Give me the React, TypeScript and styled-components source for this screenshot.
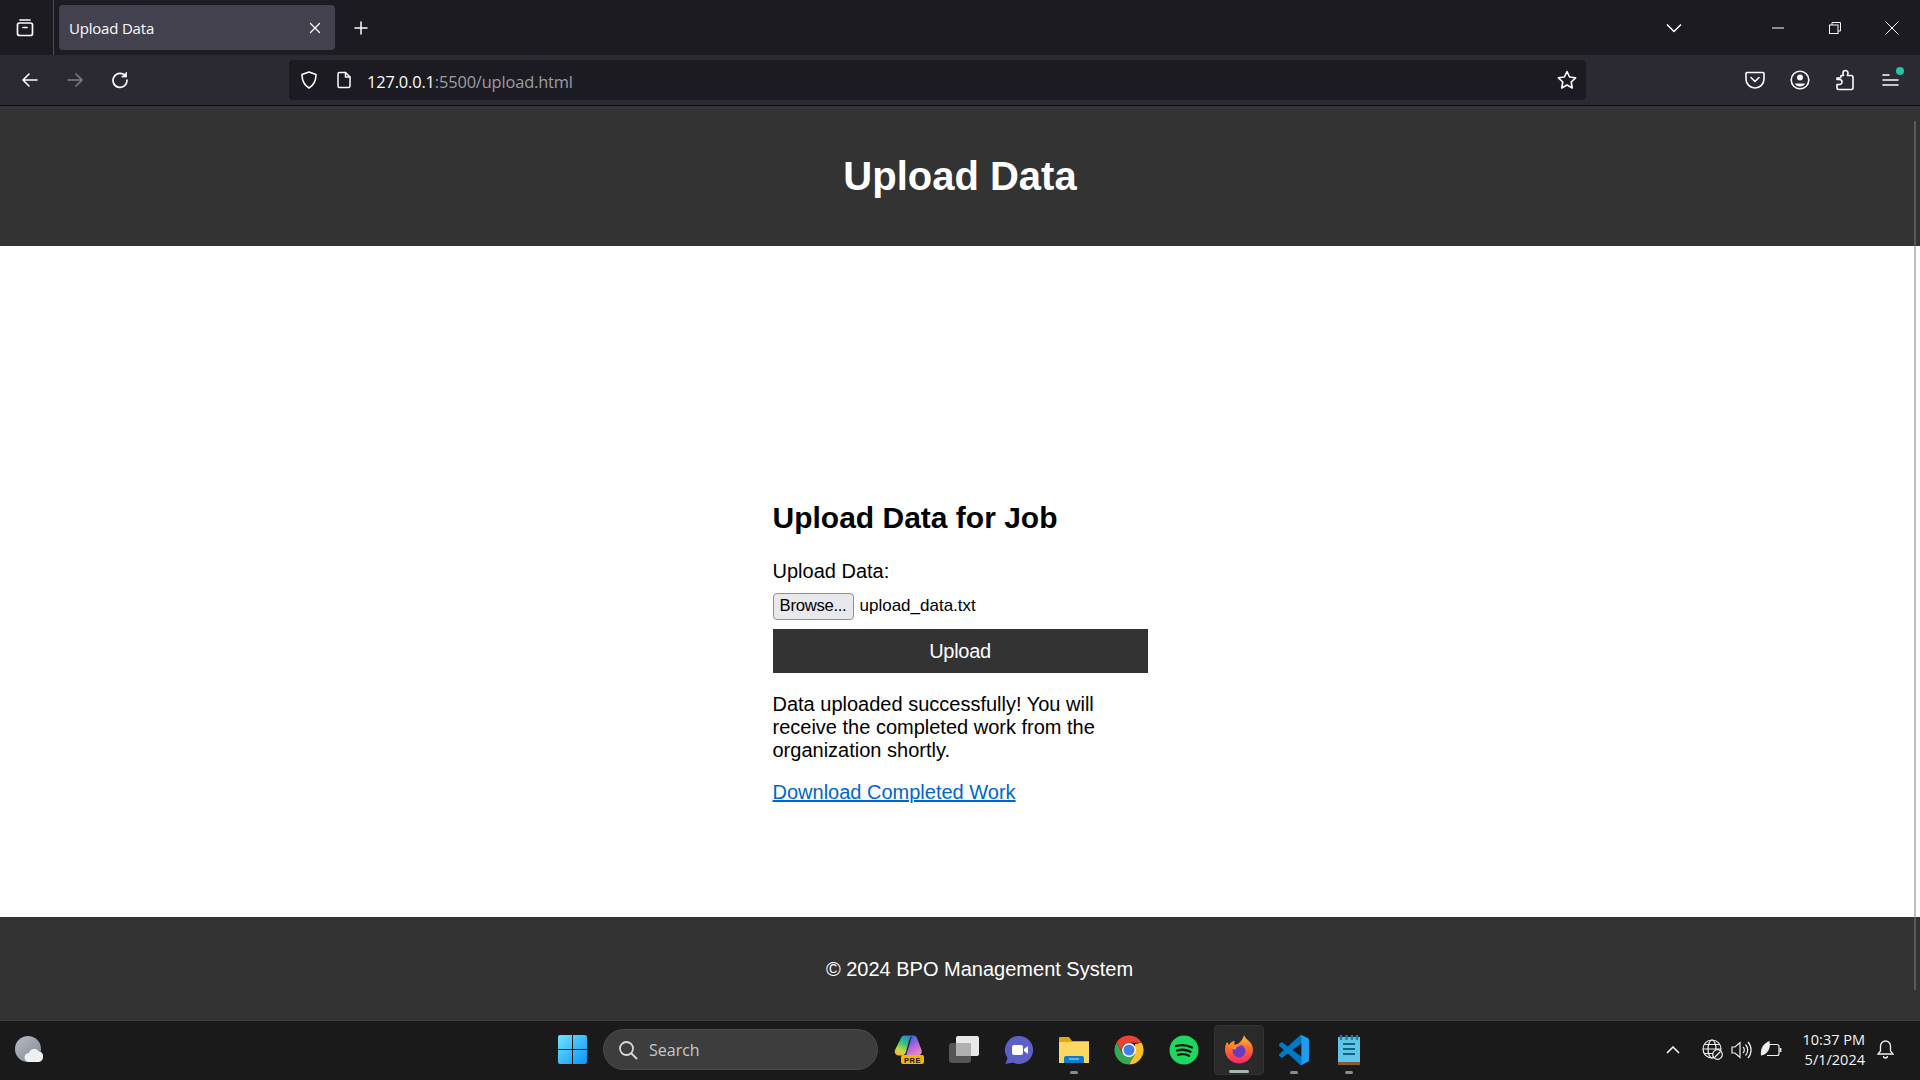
import React from "react";
import styled, { createGlobalStyle } from "styled-components";

const Global = createGlobalStyle`
  html, body { margin: 0; padding: 0; height: 100%; overflow: hidden; background: #fff; }
  #root { height: 1080px; }
`;

const Screen = styled.div`
  width: 1920px; height: 1080px; display: flex; flex-direction: column; overflow: hidden;
  font-family: "Liberation Sans", Arial, sans-serif;
`;

/* ---------- browser chrome ---------- */
const TabStrip = styled.div`
  height: 55px; flex: none; background: #1c1b22; display: flex; align-items: flex-start; color: #fbfbfe;
`;
const TabListButton = styled.div`
  width: 54px; height: 55px; flex: none; border-right: 1px solid #4a4a52; box-sizing: border-box;
  display: flex; align-items: center; justify-content: center; padding-right: 3px;
`;
const Tab = styled.div`
  width: 276px; height: 45px; margin: 5px 0 0 5px; flex: none; background: #42414d; border-radius: 4px;
  display: flex; align-items: center; justify-content: space-between; padding: 0 14px 0 10px;
  box-sizing: border-box; font: 15px "Open Sans", "Segoe UI", sans-serif;
`;
const TabTitle = styled.span` letter-spacing: -0.2px; `;
const NewTab = styled.div`
  width: 52px; height: 45px; margin-top: 5px; flex: none; display: flex; align-items: center; justify-content: center;
`;
const Spacer = styled.div` flex: 1; `;
const WinControls = styled.div`
  display: flex; align-items: center; height: 55px;
`;
const TabsMenu = styled.div`
  width: 57px; height: 53px; margin-right: 48px; display: flex; align-items: center; justify-content: center;
`;
const WinButton = styled.div<{ $w: number }>`
  width: ${(p) => p.$w}px; height: 53px; display: flex; align-items: center; justify-content: center;
`;

const NavBar = styled.div`
  height: 51px; flex: none; background: #2b2a33; display: flex; align-items: center; color: #fbfbfe;
  border-bottom: 1px solid #0c0c0d; box-sizing: border-box;
`;
const NavButtons = styled.div`
  width: 289px; flex: none; padding-left: 18px; box-sizing: border-box; display: flex; gap: 21px; align-items: center;
`;
const NavIcon = styled.div<{ $dim?: boolean }>`
  width: 24px; height: 24px; display: flex; align-items: center; justify-content: center;
  opacity: ${(p) => (p.$dim ? 0.4 : 1)};
`;
const UrlBar = styled.div`
  width: 1297px; height: 40px; flex: none; background: #1c1b22; border-radius: 4px; display: flex; align-items: center;
  padding: 0 8px 0 10px; box-sizing: border-box; gap: 17px;
`;
const UrlText = styled.div`
  flex: 1; margin-left: -2px; padding-top: 3px; font: 16.4px "Open Sans", "Segoe UI", sans-serif; letter-spacing: -0.15px; color: #fbfbfe;
  span { color: #9d9da3; }
`;
const NavRight = styled.div`
  flex: 1; display: flex; justify-content: flex-end; align-items: center; gap: 21px; padding-right: 18px;
`;
const MenuWrap = styled.div`
  position: relative; width: 24px; height: 24px; display: flex; align-items: center; justify-content: center;
`;
const Dot = styled.i`
  position: absolute; right: -2px; top: -1px; width: 8px; height: 8px; border-radius: 50%; background: #2ac3a2;
`;

/* ---------- page ---------- */
const Page = styled.div`
  flex: 1; min-height: 0; display: flex; flex-direction: column; position: relative; background: #fff;
`;
const Scrollbar = styled.div`
  position: absolute; right: 4px; top: 15px; bottom: 30px; width: 2px; background: rgba(128, 128, 128, 0.5);
`;
const PageHeader = styled.header`
  height: 140px; flex: none; background: #333; color: #fff; display: flex; align-items: center; justify-content: center;
  h1 { margin: 0; font-size: 40px; font-weight: 700; line-height: 46px; }
`;
const Main = styled.main`
  flex: 1; display: flex; align-items: flex-start; justify-content: center; padding-top: 255px; box-sizing: border-box;
`;
const Form = styled.section`
  width: 375px; color: #000; font-size: 20px;
  h2 { margin: 0 0 25px; font-size: 30px; line-height: 34px; font-weight: 700; }
`;
const Label = styled.div`
  line-height: 23px; margin-bottom: 9px;
`;
const FileRow = styled.div`
  display: flex; align-items: center; height: 28px; font-size: 17px;
`;
const Browse = styled.div`
  width: 81px; height: 27px; box-sizing: border-box; border: 1px solid #8f8f9d; border-radius: 4px; background: #e9e9ed;
  display: flex; align-items: center; justify-content: center; margin-right: 6px; color: #000;
  font-size: 16.7px; letter-spacing: -0.3px;
`;
const UploadButton = styled.div`
  margin-top: 9px; height: 44px; background: #333; color: #fff; display: flex; align-items: center; justify-content: center;
  font-size: 20px; letter-spacing: -0.3px; padding-top: 1px; box-sizing: border-box;
`;
const Message = styled.p`
  margin: 20px 0 0; line-height: 23px;
`;
const DownloadLink = styled.a`
  display: block; margin-top: 19px; line-height: 23px; color: #0066cc; text-decoration: underline;
`;
const Footer = styled.footer`
  height: 103px; flex: none; background: #333; color: #fff; font-size: 20px; display: flex; align-items: center; justify-content: center;
  padding: 2px 0 0 39px; box-sizing: border-box;
`;

/* ---------- taskbar ---------- */
const Taskbar = styled.div`
  height: 60px; flex: none; background: #1a1a1a; border-top: 1px solid #3f3f3f; box-sizing: border-box; padding-bottom: 2px;
  display: flex; align-items: center; position: relative; font-family: "Open Sans", "Segoe UI", sans-serif; color: #fff;
`;
const Weather = styled.div`
  width: 558px; flex: none; padding-left: 15px; box-sizing: border-box; display: flex; align-items: center;
`;
const Center = styled.div`
  display: flex; align-items: center;
`;
const SearchBox = styled.div`
  width: 275px; height: 41px; margin: 0 3px 0 16px; box-sizing: border-box; border-radius: 21px; background: #3d3d3d; border: 1px solid #4a4a4a;
  display: flex; align-items: center; padding-left: 14px; gap: 11px; color: #c8c8c8; font-size: 16px;
  span { padding-top: 1px; }
`;
const AppSlot = styled.div<{ $active?: boolean }>`
  width: 55px; height: 50px; position: relative; display: flex; align-items: center; justify-content: center; border-radius: 4px; box-sizing: border-box;
  ${(p) => p.$active && `background: #2a2a2a; border: 1px solid #333; width: 50px; margin: 0 2.5px;`}
`;
const Running = styled.i<{ $wide?: boolean }>`
  position: absolute; bottom: 1px; left: 50%; transform: translateX(-50%); height: 3px; border-radius: 2px;
  width: ${(p) => (p.$wide ? 20 : 8)}px; background: ${(p) => (p.$wide ? "#a9b8ae" : "#8b8b8b")};
`;
const Tray = styled.div`
  position: absolute; right: 0; top: 0; bottom: 2px; display: flex; align-items: center; padding-right: 26px;
`;
const TrayIcons = styled.div`
  display: flex; align-items: center; gap: 8px; margin-right: 20px;
  & > svg:first-child { margin-right: 14px; }
`;
const Clock = styled.div`
  text-align: right; font-size: 14.5px; line-height: 20px; margin-right: 12px; color: #f4f4f4;
`;

const Ic = { fill: "none", stroke: "currentColor", strokeWidth: 1.6, strokeLinecap: "round", strokeLinejoin: "round" } as const;

export default function App() {
  return (
    <Screen>
      <Global />
      <TabStrip>
        <TabListButton>
          <svg width="20" height="20" viewBox="0 0 20 20" {...Ic} strokeWidth={1.7}>
            <path d="M5 2h10" />
            <rect x="2.5" y="5" width="15" height="12.5" rx="2" />
            <path d="M8 9.5h4" />
          </svg>
        </TabListButton>
        <Tab>
          <TabTitle>Upload Data</TabTitle>
          <svg width="12" height="12" viewBox="0 0 12 12" {...Ic} strokeWidth={1.3}><path d="M1.5 1.5l9 9M10.5 1.5l-9 9" /></svg>
        </Tab>
        <NewTab>
          <svg width="14" height="14" viewBox="0 0 14 14" {...Ic} strokeWidth={1.5}><path d="M7 1v12M1 7h12" /></svg>
        </NewTab>
        <Spacer />
        <WinControls>
          <TabsMenu>
            <svg width="16" height="10" viewBox="0 0 16 10" {...Ic} strokeWidth={1.5} strokeLinecap="butt"><path d="M1 1.5l7 7 7-7" /></svg>
          </TabsMenu>
          <WinButton $w={56}>
            <svg width="12" height="2" viewBox="0 0 12 2" stroke="currentColor"><path d="M0 1h12" /></svg>
          </WinButton>
          <WinButton $w={57}>
            <svg width="12" height="12" viewBox="0 0 12 12" fill="none" stroke="currentColor"><path d="M3 3V.5h8.5V9H9" /><rect x=".5" y="3" width="8.5" height="8.5" /></svg>
          </WinButton>
          <WinButton $w={57}>
            <svg width="14" height="14" viewBox="0 0 14 14" fill="none" stroke="currentColor"><path d="M.5.5l13 13M13.5.5l-13 13" /></svg>
          </WinButton>
        </WinControls>
      </TabStrip>

      <NavBar>
        <NavButtons>
          <NavIcon>
            <svg width="18" height="18" viewBox="0 0 18 18" {...Ic}><path d="M16 9H2M8 3L2 9l6 6" /></svg>
          </NavIcon>
          <NavIcon $dim>
            <svg width="18" height="18" viewBox="0 0 18 18" {...Ic}><path d="M2 9h14M10 3l6 6-6 6" /></svg>
          </NavIcon>
          <NavIcon>
            <svg width="18" height="18" viewBox="0 0 18 18" {...Ic} strokeWidth={1.7}><path d="M14.6 5.2A7 7 0 1 0 16 9" /><path d="M15.5 1.5V6H11z" fill="currentColor" strokeWidth={0.8} /></svg>
          </NavIcon>
        </NavButtons>
        <UrlBar>
          <svg width="20" height="20" viewBox="0 0 20 20" {...Ic}><path d="M10 2l7 2.5C17 11 15 15 10 18 5 15 3 11 3 4.5z" /></svg>
          <svg width="16" height="18" viewBox="0 0 16 18" {...Ic} strokeWidth={1.5}><path d="M3.5 1.5h6L14 6v9a1.5 1.5 0 0 1-1.5 1.5h-9A1.5 1.5 0 0 1 2 15V3a1.5 1.5 0 0 1 1.5-1.5z" /><path d="M9.5 1.5V6H14" /></svg>
          <UrlText>127.0.0.1<span>:5500/upload.html</span></UrlText>
          <svg width="22" height="22" viewBox="0 0 22 22" {...Ic}><path d="M11 2.5l2.6 5.5 6 .8-4.4 4.2 1.1 6L11 16l-5.3 3 1.1-6L2.4 8.8l6-.8z" /></svg>
        </UrlBar>
        <NavRight>
          <NavIcon>
            <svg width="20" height="18" viewBox="0 0 20 18" {...Ic}><path d="M2 1.5h16a1 1 0 0 1 1 1V8a9 9 0 0 1-18 0V2.5a1 1 0 0 1 1-1z" /><path d="M6 6.5l4 4 4-4" /></svg>
          </NavIcon>
          <NavIcon>
            <svg width="20" height="20" viewBox="0 0 20 20" {...Ic}><circle cx="10" cy="10" r="8.8" /><circle cx="10" cy="7.5" r="3" fill="currentColor" stroke="none" /><path d="M4.8 13.5h10.4a6 6 0 0 1-10.4 0z" fill="currentColor" stroke="none" /></svg>
          </NavIcon>
          <NavIcon>
            <svg width="20" height="22" viewBox="0 0 20 22" {...Ic}><path d="M10.5 1.5A2.5 2.5 0 0 1 13 4c0 .8-.3 1.4-.6 2.5H16a2 2 0 0 1 2 2V19a1.5 1.5 0 0 1-1.5 1.5h-13A1.5 1.5 0 0 1 2 19v-3.500h2.500a2.500 2.500 0 0 0 0-5H2V9h2.500A1.500 1.500 0 0 0 6 7.500v-1h2.500C8.200 5.500 8 4.800 8 4a2.500 2.500 0 0 1 2.500-2.500z" /></svg>
          </NavIcon>
          <MenuWrap>
            <svg width="18" height="16" viewBox="0 0 18 16" {...Ic}><path d="M2 3h6M2 8h15M2 13h15" /></svg>
            <Dot />
          </MenuWrap>
        </NavRight>
      </NavBar>

      <Page>
        <PageHeader><h1>Upload Data</h1></PageHeader>
        <Main>
          <Form>
            <h2>Upload Data for Job</h2>
            <Label>Upload Data:</Label>
            <FileRow><Browse>Browse...</Browse>upload_data.txt</FileRow>
            <UploadButton>Upload</UploadButton>
            <Message>Data uploaded successfully! You will receive the completed work from the organization shortly.</Message>
            <DownloadLink href="#">Download Completed Work</DownloadLink>
          </Form>
        </Main>
        <Footer>© 2024 BPO Management System</Footer>
        <Scrollbar />
      </Page>

      <Taskbar>
        <Weather>
          <svg width="30" height="28" viewBox="0 0 30 28">
            <defs><linearGradient id="moon" x1="0" y1="0" x2="1" y2="1"><stop offset="0" stopColor="#b5bcc4" /><stop offset="1" stopColor="#808a96" /></linearGradient></defs>
            <circle cx="13" cy="13" r="13" fill="url(#moon)" />
            <path d="M14 26a4.5 4.5 0 0 1 0-9 5.5 5.5 0 0 1 10-1.500 4.500 4.500 0 0 1 4 5.500A5 5 0 0 1 24 26z" fill="#eef0f2" />
          </svg>
        </Weather>
        <Center>
          <svg width="29" height="29" viewBox="0 0 29 29">
            <defs><linearGradient id="win" x1="0" y1="0" x2="1" y2="1"><stop offset="0" stopColor="#6fe3ff" /><stop offset="1" stopColor="#0a94f5" /></linearGradient></defs>
            <path d="M0 2a2 2 0 0 1 2-2h12v14H0zM15 0h12a2 2 0 0 1 2 2v12H15zM0 15h14v14H2a2 2 0 0 1-2-2zM15 15h14v12a2 2 0 0 1-2 2H15z" fill="url(#win)" />
          </svg>
          <SearchBox>
            <svg width="20" height="20" viewBox="0 0 20 20" fill="none" stroke="#d8d8d8" strokeWidth="1.8" strokeLinecap="round"><circle cx="8.5" cy="8.5" r="6.5" /><path d="M13.5 13.5l5 5" /></svg>
            <span>Search</span>
          </SearchBox>
          <AppSlot>
            <svg width="30" height="30" viewBox="0 0 30 30">
              <defs>
                <linearGradient id="cpA" x1="0.7" y1="0" x2="0.2" y2="1"><stop offset="0" stopColor="#1d82e0" /><stop offset=".4" stopColor="#33c27f" /><stop offset=".75" stopColor="#c4d83f" /><stop offset="1" stopColor="#f6b73c" /></linearGradient>
                <linearGradient id="cpB" x1="0.3" y1="0" x2="0.8" y2="1"><stop offset="0" stopColor="#1b6fe0" /><stop offset=".4" stopColor="#a25ee0" /><stop offset="1" stopColor="#f78cc0" /></linearGradient>
              </defs>
              <path d="M19 .5c2.5 0 3.5 1 4.2 3L27.5 15c1 3-1 5.5-4 5.500H12L18 1z" fill="url(#cpB)" />
              <path d="M11 .5h9.5C17 1 16 3 15 6l-3 11c-.6 2-2 3.5-4.500 3.500H5c-3 0-5-2.500-4-5.500L6.500 4C7.300 1.800 8.500.5 11 .5z" fill="url(#cpA)" />
              <rect x="7" y="20" width="23" height="9" rx="2" fill="#f4b400" />
              <text x="18.5" y="27.5" fontSize="7.5" fontWeight="700" fill="#1a1a1a" textAnchor="middle" fontFamily="Liberation Sans" letterSpacing=".5">PRE</text>
            </svg>
          </AppSlot>
          <AppSlot>
            <svg width="32" height="30" viewBox="0 0 32 30">
              <rect x="1" y="8" width="22" height="20" rx="3" fill="#555" />
              <rect x="8" y="1" width="23" height="20" rx="2" fill="#e8e8e8" />
              <rect x="8" y="8" width="15" height="13" fill="#b0b0b0" />
            </svg>
          </AppSlot>
          <AppSlot>
            <svg width="30" height="30" viewBox="0 0 30 30">
              <path d="M15 1a14 14 0 1 1-6 26.6L1.500 29 3.500 23A14 14 0 0 1 15 1z" fill="#5b5fc7" />
              <rect x="8" y="10" width="11" height="10" rx="2" fill="#fff" />
              <path d="M20 14l4-3v8l-4-3z" fill="#fff" />
            </svg>
          </AppSlot>
          <AppSlot>
            <svg width="30" height="28" viewBox="0 0 30 28">
              <path d="M0 2a1 1 0 0 1 1-1h9l3 4h17v22H0z" fill="#e3a80c" />
              <path d="M0 6h30v21H0z" fill="#fdd75f" />
              <path d="M5 22a2 2 0 0 1 2-2h16a2 2 0 0 1 2 2v5H5z" fill="#0d7cc9" />
              <path d="M10 23h10" stroke="#7cc6f5" strokeWidth="1.5" />
            </svg>
            <Running />
          </AppSlot>
          <AppSlot>
            <svg width="30" height="30" viewBox="0 0 30 30">
              <path d="M2.44 7.75A14.5 14.5 0 0 1 27.56 7.75H15a7 7 0 0 0-6.5 10.2z" fill="#ea4335" />
              <path d="M2.44 7.75A14.5 14.5 0 0 0 15 29.5L21 19H9z" fill="#34a853" />
              <path d="M27.56 7.75A14.5 14.5 0 0 1 15 29.5L21 19V9z" fill="#fbc02d" />
              <circle cx="15" cy="15" r="7" fill="#fff" />
              <circle cx="15" cy="15" r="5.5" fill="#3f7fee" />
            </svg>
          </AppSlot>
          <AppSlot>
            <svg width="30" height="30" viewBox="0 0 30 30">
              <circle cx="15" cy="15" r="14.5" fill="#1ed760" />
              <path d="M7 11c5-1.500 11-1 16 1.500M8 15.500c4.500-1.200 9.500-.8 13.500 1.300M9 19.800c3.800-1 8-.6 11 1" stroke="#151515" strokeWidth="2.3" fill="none" strokeLinecap="round" />
            </svg>
          </AppSlot>
          <AppSlot $active>
            <svg width="30" height="30" viewBox="0 0 30 30">
              <defs><linearGradient id="ff" x1="0.5" y1="0" x2="0.5" y2="1"><stop offset="0" stopColor="#ffc02e" /><stop offset=".5" stopColor="#ff6a2a" /><stop offset="1" stopColor="#f5246e" /></linearGradient></defs>
              <path d="M20 0c1 3 3 4 5 6 3 3 4 6 4 9a14 14 0 1 1-28-1c0-3 1-5 2-7 1 1 1 2 2 3 1-2 3-4 6-4-1 2-1 3 0 4 3-1 7-3 9-10z" fill="url(#ff)" />
              <circle cx="15" cy="16" r="6.5" fill="#6a3bc0" />
              <path d="M7 12c3-3 8-3 10-1-3 0-5 1-5 3-2 1-4 0-5-2z" fill="#ff8a2a" />
            </svg>
            <Running $wide />
          </AppSlot>
          <AppSlot>
            <svg width="30" height="30" viewBox="0 0 100 100">
              <path fillRule="evenodd" d="M70.9 99.3a6.2 6.2 0 0 0 5-.2l20.6-9.9a6.2 6.2 0 0 0 3.5-5.6V16.4a6.2 6.2 0 0 0-3.5-5.6L75.9.9a6.2 6.2 0 0 0-7.1 1.2L29.4 38 12.2 25a4.2 4.2 0 0 0-5.3.2l-5.5 5a4.2 4.2 0 0 0 0 6.200L16.300 50 1.400 63.600a4.200 4.200 0 0 0 0 6.200l5.500 5a4.200 4.200 0 0 0 5.300.2l17.200-13 39.400 35.900a6.200 6.200 0 0 0 2.100 1.400zM75 27.300 45.100 50 75 72.700z" fill="#0078c8" />
              <path d="M75.9 99.1a6.2 6.2 0 0 1-7.100-1.200c2.300 2.300 6.200.7 6.200-2.600V4.700c0-3.300-3.900-4.900-6.200-2.600a6.200 6.200 0 0 1 7.100-1.200l20.600 9.900a6.200 6.200 0 0 1 3.500 5.600v67.200a6.200 6.200 0 0 1-3.500 5.600z" fill="#1f9cf0" />
            </svg>
            <Running />
          </AppSlot>
          <AppSlot>
            <svg width="24" height="30" viewBox="0 0 24 30">
              <rect x="1" y="2" width="22" height="27" fill="#5cc5e8" />
              <rect x="1" y="27" width="22" height="3" fill="#8a5a2b" />
              <path d="M4 0v4M9.5 0v4M15 0v4M20 0v4" stroke="#1c7ea8" strokeWidth="2.4" strokeLinecap="round" />
              <path d="M6 9h12M6 14h12M6 19h12" stroke="#14627f" strokeWidth="2" />
            </svg>
            <Running />
          </AppSlot>
        </Center>
        <Tray>
          <TrayIcons>
            <svg width="14" height="8" viewBox="0 0 14 8" fill="none" stroke="#fff" strokeWidth="1.5"><path d="M1 7l6-6 6 6" /></svg>
            <svg width="21" height="21" viewBox="0 0 21 21" fill="none" stroke="#f0f0f0" strokeWidth="1.2"><circle cx="10" cy="10" r="9" /><ellipse cx="10" cy="10" rx="4" ry="9" /><path d="M1 10h18M2.500 5.500h15M2.500 14.500h15" /><circle cx="15.500" cy="15.500" r="4.800" fill="#1a1a1a" /><path d="M12.500 18.500l6-6" /></svg>
            <svg width="21" height="20" viewBox="0 0 21 20" fill="none" stroke="#f0f0f0" strokeWidth="1.2"><path d="M1 7h3l5-4.500v15L4 13H1z" /><path d="M12 7a4 4 0 0 1 0 6M14.500 4.500a8 8 0 0 1 0 11M17 2a12 12 0 0 1 0 16" /></svg>
            <svg width="22" height="20" viewBox="0 0 22 20" fill="none" stroke="#f0f0f0" strokeWidth="1.2"><path d="M8 4.500h9a2 2 0 0 1 2 2v7a2 2 0 0 1-2 2H7" /><path d="M20.500 8v4" strokeWidth="1.8" /><path d="M1 15.500C0 9 3 3.500 9.500 1c1.500 7-1.500 13.500-8.500 14.500z" fill="#f0f0f0" stroke="none" /></svg>
          </TrayIcons>
          <Clock>10:37 PM<br />5/1/2024</Clock>
          <svg width="17" height="19" viewBox="0 0 17 19" fill="none" stroke="#f0f0f0" strokeWidth="1.3"><path d="M8.500 1a5 5 0 0 1 5 5v5l2.500 3H1l2.500-3V6a5 5 0 0 1 5-5z" /><path d="M6.500 16a2 2 0 0 0 4 0" /></svg>
        </Tray>
      </Taskbar>
    </Screen>
  );
}
